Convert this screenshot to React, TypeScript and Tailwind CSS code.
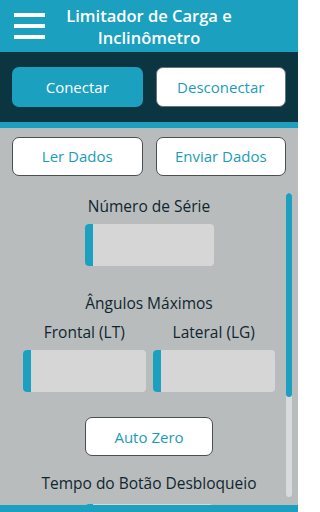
import React from "react";

function Field({ className }: { className: string }) {
  return (
    <div className={`flex h-[42px] overflow-hidden rounded-[4px] bg-[#d6d6d6] ${className}`}>
      <div className="w-[8px] bg-[#1ba0bf]" />
    </div>
  );
}

function OutlineButton({ label, className }: { label: string; className: string }) {
  return (
    <button className={`flex h-[39px] items-center justify-center rounded-[7px] border border-[#4a4f52] bg-white text-[15px] text-[#1b9cba] ${className}`}>
      {label}
    </button>
  );
}

export default function App() {
  return (
    <div
      className="relative h-[512px] w-[298px] overflow-hidden bg-[#b9bcbd]"
      style={{ fontFamily: '"Open Sans", sans-serif' }}
    >
      <header className="flex h-[52px] items-center bg-[#1ba0bf]">
        <div className="flex w-[59px] flex-col gap-[7px] pl-[14px]">
          <div className="h-[4px] w-[31px] bg-white" />
          <div className="h-[4px] w-[31px] bg-white" />
          <div className="h-[4px] w-[31px] bg-white" />
        </div>
        <div className="flex-1 pt-[2px] text-center text-[16.5px] font-semibold leading-[22px] text-white">
          <div>Limitador de Carga e</div>
          <div>Inclinômetro</div>
        </div>
        <div className="w-[59px]" />
      </header>

      <div className="grid h-[70px] grid-cols-2 items-center gap-[13px] bg-[#0c3542] px-[12px]">
        <button className="flex h-[40px] items-center justify-center rounded-[7px] bg-[#1ba0bf] text-[15px] text-white">
          Conectar
        </button>
        <button className="flex h-[40px] items-center justify-center rounded-[7px] border border-[#6b7478] bg-white text-[15px] text-[#1b9cba]">
          Desconectar
        </button>
      </div>
      <div className="h-[6px] bg-[#1ba0bf]" />

      <div className="grid grid-cols-2 gap-[13px] px-[12px] pt-[9px]">
        <OutlineButton label="Ler Dados" className="w-full" />
        <OutlineButton label="Enviar Dados" className="w-full" />
      </div>

      <div className="flex flex-col items-center text-[15.5px] leading-[20px] text-[#10262f]">
        <div className="mt-[20px]">Número de Série</div>
        <Field className="mt-[8px] w-[129px]" />
        <div className="mt-[27px]">Ângulos Máximos</div>
        <div className="mt-[9px] grid w-[252px] grid-cols-2 gap-[7px] text-center">
          <div>Frontal (LT)</div>
          <div>Lateral (LG)</div>
        </div>
        <div className="mt-[8px] grid w-[252px] grid-cols-2 gap-[7px]">
          <Field className="w-full" />
          <Field className="w-full" />
        </div>
        <OutlineButton label="Auto Zero" className="mt-[25px] w-[128px]" />
        <div className="mt-[17px]">Tempo do Botão Desbloqueio</div>
        <Field className="mt-[11px] w-[128px]" />
      </div>

      <div className="absolute left-[286px] top-[193px] flex h-[304px] w-[6px] flex-col overflow-hidden rounded-full bg-[#d9dadb]">
        <div className="h-[204px] rounded-full bg-[#1ba0bf]" />
      </div>

      <div className="absolute bottom-0 left-0 h-[7px] w-full bg-[#1ba0bf]" />
    </div>
  );
}
